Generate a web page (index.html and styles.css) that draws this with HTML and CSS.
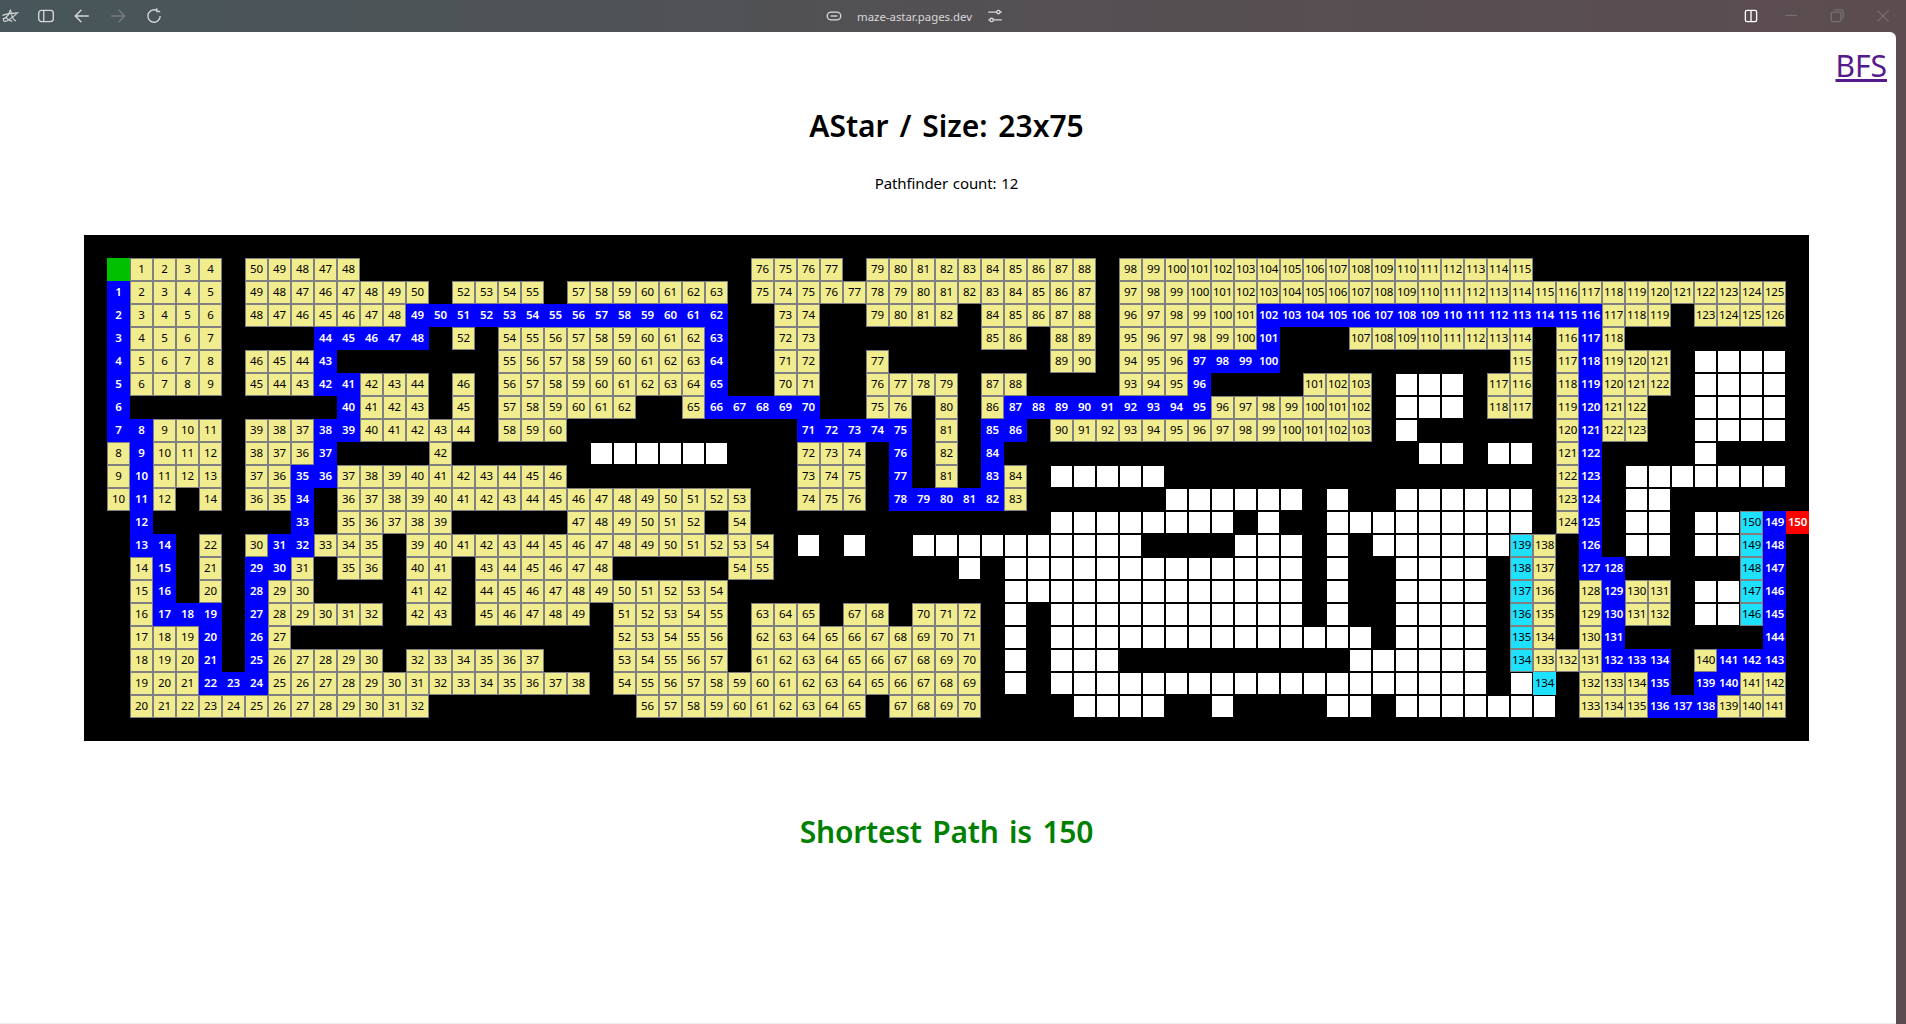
FILE: index.html
```html
<!DOCTYPE html>
<html lang="en">
<head>
    <meta charset="UTF-8">
    <title>AStar Maze</title>
    <link rel="stylesheet" href="styles.css">
</head>
<body>
    <header class="toolbar">
        <div class="tools">
            <svg class="icon logo" viewBox="0 0 20 16"><path d="M2 11c2.500-.500 4.500-1.500 6-4 1-1.800 1.500-4 2.500-5.500 1 2 1 5 2 7.500 .8 2 2 3.500 4 4.500M1.500 7.500c3-1.500 9-2.500 17-3-2.500 2-5 4.500-8 6.500-2 1.300-4 2.800-5.500 3-2 .2-3-1.500-1.500-3 1.500-1.300 3-.6 4 .5 1.500 1.500 3.500 2.500 5 2"/></svg>
            <svg class="icon" viewBox="0 0 16 16"><rect x="1.500" y="3" width="13" height="10" rx="2.500"/><path d="M6 3v10"/></svg>
            <svg class="icon" viewBox="0 0 16 16"><path d="M14 8H2.500M7.500 2.500 2 8l5.500 5.500"/></svg>
            <svg class="icon dim" viewBox="0 0 16 16"><path d="M2 8h11.500M8.500 2.500 14 8l-5.500 5.500"/></svg>
            <svg class="icon" viewBox="0 0 16 16"><path d="M13.500 8A5.500 5.500 0 1 1 11 3.400M10.500 1v3h3"/></svg>
        </div>
        <div class="url">
            <svg class="icon" viewBox="0 0 16 16"><rect x="2" y="4.500" width="12" height="7" rx="3.500"/><path d="M5 8h6"/></svg>
            <span class="address">maze-astar.pages.dev</span>
            <svg class="icon" viewBox="0 0 16 16"><path d="M2 4.500h7.500M12.500 4.500H14M2 11.500h1.500M6.500 11.500H14"/><circle cx="11" cy="4.500" r="1.500"/><circle cx="5" cy="11.500" r="1.500"/></svg>
        </div>
        <div class="window-btns">
            <svg class="icon bright" viewBox="0 0 16 16"><rect x="3" y="3" width="10" height="10" rx="1.500"/><path d="M8 3v10"/></svg>
            <svg class="icon faint" viewBox="0 0 16 16"><path d="M3 7.500h10"/></svg>
            <svg class="icon faint" viewBox="0 0 16 16"><rect x="3" y="4.500" width="8.500" height="8.500" rx="1.500"/><path d="M5.500 2.500h6a2 2 0 0 1 2 2v6"/></svg>
            <svg class="icon faint" viewBox="0 0 16 16"><path d="M3 3l10 10M13 3 3 13"/></svg>
        </div>
    </header>

    <main class="page">
        <div class="top-link"><a href="#">BFS</a></div>
        <h1>AStar / Size: 23x75</h1>
        <p class="count">Pathfinder count: 12</p>
        <div id="maze" class="maze"></div>
        <h2 class="result">Shortest Path is 150</h2>
    </main>

    <script src="maze.js"></script>
</body>
</html>
```

FILE: styles.css
```css
body {
    margin: 0;
    height: 100vh;
    overflow: hidden;
    display: flex;
    flex-direction: column;
    font-family: "Noto Sans", sans-serif;
    background: linear-gradient(90deg, #47565a, #535053 50%, #5c4c50);
}

.toolbar {
    height: 32px;
    flex-shrink: 0;
    display: grid;
    grid-template-columns: 825px auto 1fr;
    align-items: center;
    color: #d8d8d8;
}

.tools {
    display: flex;
    align-items: center;
    gap: 18px;
    padding-left: 1px;
}

.url {
    display: flex;
    align-items: center;
    font-size: 11.400px;
}

.address {
    margin: 0 14px 0 14px;
}

.window-btns {
    display: flex;
    justify-content: flex-end;
    align-items: center;
    gap: 28px;
    padding-right: 14px;
}

.window-btns .bright {
    margin-right: -6px;
}

.icon {
    width: 18px;
    height: 18px;
    fill: none;
    stroke: currentColor;
    stroke-width: 1.200;
}

.dim {
    color: #7a7c7e;
}

.faint {
    color: #757072;
}

.bright {
    color: #fff;
}

.page {
    flex: 1;
    margin-right: 10px;
    padding-right: 3px;
    background-color: #fff;
    border-top-right-radius: 6px;
    border-bottom: 1px solid #eee;
    text-align: center;
    color: #000;
}

.top-link {
    height: 54px;
    padding-right: 6px;
    text-align: right;
    font-size: 30px;
    line-height: 44px;
    padding-top: 12px;
    box-sizing: border-box;
}

.top-link a {
    color: #551a8b;
}

h1 {
    margin: 20px 0 0;
    font-size: 30px;
    line-height: 40px;
    font-weight: 600;
    word-spacing: 3px;
}

.count {
    margin: 26px 0 0;
    font-size: 15px;
    line-height: 22px;
    word-spacing: 1px;
    letter-spacing: -0.100px;
}

.maze {
    width: 1725px;
    margin: 41px auto 0;
    padding: 23px 0 23px 23px;
    box-sizing: border-box;
    background-color: #000;
    display: grid;
    grid-template-columns: repeat(74, 23px);
    grid-auto-rows: 23px;
}

.cell {
    box-sizing: border-box;
    border: 1px solid #000;
    padding-bottom: 2px;
    display: flex;
    align-items: center;
    justify-content: center;
    font-size: 11.500px;
    letter-spacing: -0.200px;
    overflow: hidden;
}

.cell.open {
    background-color: #fff;
}

.cell.seen {
    background-color: #f1ec8d;
    border-color: #808080;
}

.cell.path {
    background-color: #00f;
    border-color: #00f;
    color: #fff;
    font-weight: 600;
}

.cell.front {
    background-color: #1de1ff;
    border-color: #808080;
}

.cell.front-plain {
    background-color: #1de1ff;
    border-color: #1de1ff;
}

.cell.start {
    background-color: #00c000;
    border-color: #00c000;
}

.cell.end {
    background-color: #f00;
    border-color: #f00;
    color: #fff;
    font-weight: 600;
}

.result {
    margin: 71px 0 0;
    font-size: 30px;
    line-height: 40px;
    font-weight: 600;
    letter-spacing: -0.250px;
    color: #008000;
    word-spacing: 3px;
}
```

FILE: maze.js
```js
// # wall, . not visited, b path, c frontier, S start, E end. "#5" = five walls, "3-7" = 3,4,5,6,7
var rows = [
    "S 1-4 # 50 49 48 47 48 #17 76 75 76 77 # 79-88 # 98-115 #12",
    "b1 2-5 # 49 48 47 46 47 48 49 50 # 52-55 # 57-63 # 75 74 75-87 # 97-125 #",
    "b2 3-6 # 48 47 46 45 46 47 48 b49-62 #2 73 74 #2 79-82 # 84-88 # 96-101 b102-116 117-119 # 123-126 #",
    "b3 4-7 #4 b44-48 # 52 # 54-62 b63 #2 72 73 #7 85 86 # 88 89 # 95-100 b101 #3 107-114 # 116 b117 118 #8",
    "b4 5-8 # 46 45 44 b43 #7 55-63 b64 #2 71 72 #2 77 #7 89 90 # 94-96 b97-100 #10 115 # 117 b118 119-121 # .4 #",
    "b5 6-9 # 45 44 43 b42 b41 42-44 # 46 # 56-64 b65 #2 70 71 #2 76-79 # 87 88 #4 93-95 b96 #4 101-103 # .3 # 117 116 # 118 b119 120-122 # .4 #",
    "b6 #9 b40 41-43 # 45 # 57-62 #2 65 b66-70 #2 75 76 # 80 # 86 b87-95 96-102 # .3 # 118 117 # 119 b120 121 122 #2 .4 #",
    "b7 b8 9-11 # 39 38 37 b38 b39 40-44 # 58-60 #10 b71-75 # 81 # b85 b86 # 90-103 # .1 #6 120 b121 122 123 #2 .4 #",
    "8 b9 10-12 # 38 37 36 b37 #4 42 #6 .6 #3 72-74 # b76 # 82 # b84 #18 .2 # .2 # 121 b122 #4 .1 #4",
    "9 b10 11-13 # 37 36 b35 b36 37-46 #10 73-75 # b77 # 81 # b83 84 # .5 #17 122 b123 # .7 #",
    "10 b11 12 # 14 # 36 35 b34 # 36-53 #2 74-76 # b78-82 83 #6 .6 # .1 #2 .6 # 123 b124 # .2 #6",
    "# b12 #6 b33 # 35-39 #5 47-52 # 54 #13 .8 # .1 #2 .9 # 124 b125 # .2 # .2 c150 b149 E150",
    "# b13 b14 # 22 # 30 b31 b32 33-35 # 39-54 # .1 # .1 #2 .10 #4 .3 # .1 # .6 c139 138 # b126 # .2 # .2 c149 b148 #",
    "# 14 b15 # 21 # b29 b30 31 # 35 36 # 40 41 # 43-48 #5 54 55 #8 .1 # .13 # .1 #2 .4 # c138 137 # b127 b128 #5 c148 b147 #",
    "# 15 b16 # 20 # b28 29 30 #4 41 42 # 44-54 #12 .13 # .1 #2 .4 # c137 136 # 128 b129 130 131 # .2 c147 b146 #",
    "# 16 b17 b18 b19 # b27 28-32 # 42 43 # 45-49 # 51-55 # 63-65 # 67 68 # 70-72 # .1 # .11 # .1 #2 .4 # c136 135 # 129 b130 131 132 # .2 c146 b145 #",
    "# 17-19 b20 # b26 27 #14 52-56 # 62-71 # .1 # .14 # .4 # c135 134 # 130 b131 #6 b144 #",
    "# 18-20 b21 # b25 26-30 # 32-37 #3 53-57 # 61-70 # .1 # .3 #10 .6 # c134 133 132 131 b132-134 # 140 b141-143 #",
    "# 19-21 b22-24 25-38 # 54-69 # .1 # .19 # .1 f134 # 132-134 b135 # b139 b140 141 142 #",
    "# 20-32 #9 56-65 # 67-70 #4 .4 #2 .1 #4 .2 # .7 # 133-135 b136-138 139-141 #"
];

var kinds = { "b": "path", "c": "front", "f": "front-plain", "E": "end" };
var maze = document.getElementById("maze");

function addCell(kind, text) {
    var cell = document.createElement("div");
    cell.className = kind ? "cell " + kind : "cell";
    if (text !== undefined) {
        cell.textContent = text;
    }
    maze.appendChild(cell);
}

rows.forEach(function (row) {
    row.split(" ").forEach(function (token) {
        var first = token.charAt(0);
        if (first === "#" || first === ".") {
            var n = parseInt(token.slice(1)) || 1;
            for (var i = 0; i < n; i++) {
                addCell(first === "." ? "open" : "");
            }
        } else if (first === "S") {
            addCell("start");
        } else {
            var kind = kinds[first] || "seen";
            var parts = token.replace(/^[bcfE]/, "").split("-");
            var from = parseInt(parts[0]);
            var to = parts[1] ? parseInt(parts[1]) : from;
            for (var v = from; v <= to; v++) {
                addCell(kind, v);
            }
        }
    });
});
```
